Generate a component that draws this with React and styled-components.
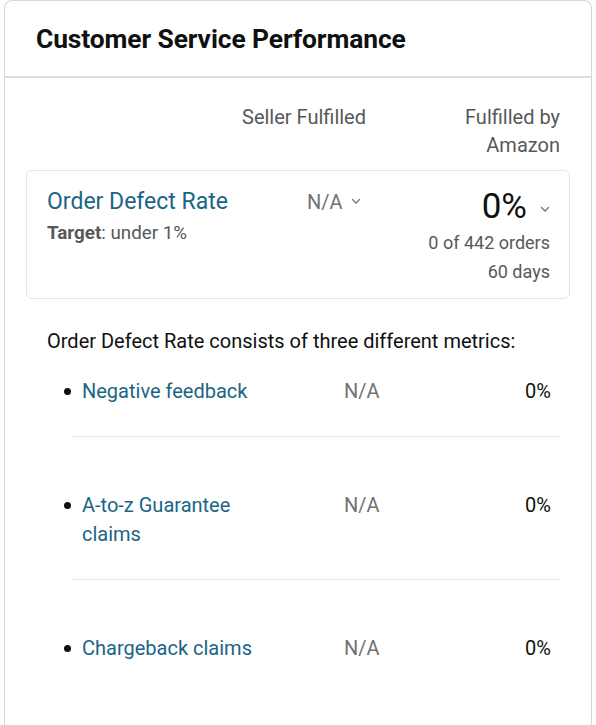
import React from 'react'
import styled, { createGlobalStyle } from 'styled-components'

const GlobalStyle = createGlobalStyle`
  html, body {
    margin: 0;
    padding: 0;
    background: #fff;
  }
  body {
    font-family: Roboto, "Liberation Sans", Arial, sans-serif;
    color: #0f1111;
  }
`

const Card = styled.section`
  margin: 0 4px;
  border: 1px solid #d5d9d9;
  border-bottom: none;
  border-radius: 8px 8px 0 0;
  background: #fff;
`

const CardHeader = styled.header`
  height: 75px;
  display: flex;
  align-items: center;
  padding: 0 31px;
  border-bottom: 2px solid #dcdede;
`

const Title = styled.h1`
  margin: 0;
  font-size: 26.4px;
  font-weight: 700;
  color: #0f1111;
  letter-spacing: -0.1px;
`

const CardBody = styled.div`
  padding: 25px 21px 60px;
`

const ColumnHeads = styled.div`
  display: grid;
  grid-template-columns: 1fr auto 110px;
  column-gap: 84px;
  padding-right: 10px;
  font-size: 20px;
  line-height: 28px;
  color: #565959;
`

const ColumnHead = styled.div`
  text-align: right;
`

const RateBox = styled.div`
  margin-top: 11px;
  border: 1px solid #e3e6e6;
  border-radius: 6px;
  padding: 15px 19px 12px 20px;
  display: grid;
  grid-template-columns: 260px 1fr auto;
  align-items: start;
`

const RateName = styled.a`
  display: block;
  font-size: 23px;
  line-height: 32px;
  color: #1a6586;
  text-decoration: none;
`

const Target = styled.div`
  margin-top: 1px;
  font-size: 18.8px;
  line-height: 28px;
  color: #565959;

  b {
    font-weight: 700;
  }
`

const Dropdown = styled.div`
  display: flex;
  align-items: center;
  gap: ${p => p.$gap || 8}px;
  justify-content: ${p => (p.$end ? 'flex-end' : 'flex-start')};
  font-size: ${p => p.$size || 20}px;
  line-height: ${p => p.$lh || 32}px;
  color: ${p => p.$color || '#6f7373'};
`

const Chevron = styled.svg`
  width: 10px;
  height: 7px;
  flex: none;
  margin-top: ${p => p.$offset || 0}px;
`

const Sub = styled.div`
  text-align: right;
  font-size: 18px;
  line-height: 29px;
  color: #565959;
`

const ValueCol = styled.div`
  display: flex;
  flex-direction: column;
  align-items: flex-end;
`

const Intro = styled.p`
  margin: 28px 0 22px;
  padding-left: 21px;
  font-size: 20px;
  line-height: 28px;
  color: #0f1111;
`

const Metrics = styled.ul`
  list-style: none;
  margin: 0;
  padding: 0;
`

const Metric = styled.li`
  display: grid;
  grid-template-columns: 18px 262px 1fr auto;
  align-items: start;
  padding: ${p => (p.$first ? 0 : 54)}px 19px 30px 38px;
  font-size: 20px;
  line-height: 29px;
`

const Bullet = styled.span`
  width: 7px;
  height: 7px;
  margin-top: 11px;
  border-radius: 50%;
  background: #0f1111;
`

const MetricName = styled.a`
  max-width: 190px;
  color: #1a6586;
  text-decoration: none;
`

const MetricNA = styled.span`
  color: #6f7373;
`

const MetricValue = styled.span`
  color: #0f1111;
  text-align: right;
`

const Divider = styled.li`
  height: 1px;
  margin: 0 10px 0 46px;
  background: #e6e8e8;
`

const ChevronIcon = ({ offset }) => (
  <Chevron $offset={offset} viewBox="0 0 10 7" fill="none">
    <path d="M1.5 1.5 L5 5 L8.5 1.5" stroke="#6f7373" strokeWidth="1.3" strokeLinecap="round" strokeLinejoin="round" />
  </Chevron>
)

const metrics = [
  { name: 'Negative feedback', seller: 'N/A', fba: '0%' },
  { name: 'A-to-z Guarantee claims', seller: 'N/A', fba: '0%' },
  { name: 'Chargeback claims', seller: 'N/A', fba: '0%' },
]

const App = () => {
  return (
    <>
      <GlobalStyle />
      <Card>
        <CardHeader>
          <Title>Customer Service Performance</Title>
        </CardHeader>
        <CardBody>
          <ColumnHeads>
            <span />
            <ColumnHead>Seller Fulfilled</ColumnHead>
            <ColumnHead>Fulfilled by Amazon</ColumnHead>
          </ColumnHeads>

          <RateBox>
            <div>
              <RateName href="#">Order Defect Rate</RateName>
              <Target>
                <b>Target</b>: under 1%
              </Target>
            </div>
            <Dropdown>
              N/A
              <ChevronIcon offset={-2} />
            </Dropdown>
            <ValueCol>
              <Dropdown $end $size={35} $lh={42} $gap={13} $color="#0f1111">
                0%
                <ChevronIcon offset={4} />
              </Dropdown>
              <Sub>0 of 442 orders</Sub>
              <Sub>60 days</Sub>
            </ValueCol>
          </RateBox>

          <Intro>Order Defect Rate consists of three different metrics:</Intro>

          <Metrics>
            {metrics.map((m, i) => (
              <React.Fragment key={m.name}>
                {i > 0 && <Divider aria-hidden="true" />}
                <Metric $first={i === 0}>
                  <Bullet />
                  <MetricName href="#">{m.name}</MetricName>
                  <MetricNA>{m.seller}</MetricNA>
                  <MetricValue>{m.fba}</MetricValue>
                </Metric>
              </React.Fragment>
            ))}
          </Metrics>
        </CardBody>
      </Card>
    </>
  )
}

export default App
